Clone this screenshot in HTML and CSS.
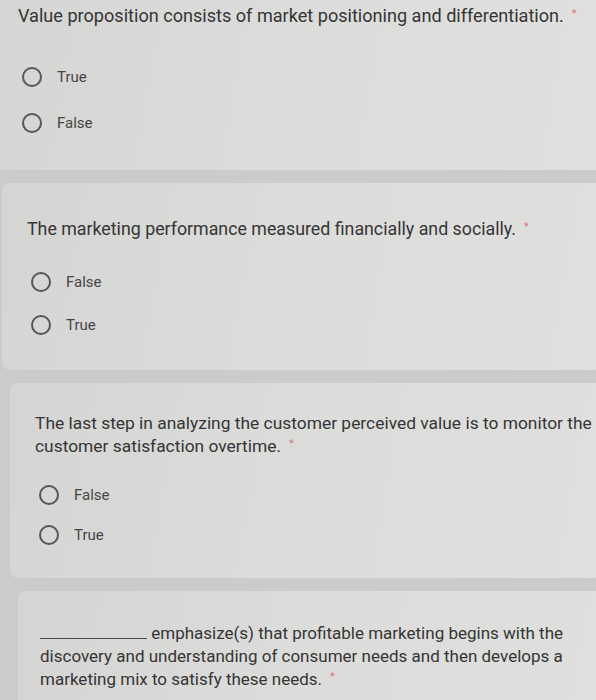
FILE: index.html
```html
<!DOCTYPE html>
<html>
<head>
<meta charset="utf-8">
<link rel="stylesheet" href="styles.css">
</head>
<body>
<div class="page">
  <section class="card card-1">
    <div class="question">Value proposition consists of market positioning and differentiation.<span class="req">*</span></div>
    <div class="options">
      <label class="option"><span class="radio"></span><span class="label">True</span></label>
      <label class="option"><span class="radio"></span><span class="label">False</span></label>
    </div>
  </section>
  <section class="card card-2">
    <div class="question">The marketing performance measured financially and socially.<span class="req">*</span></div>
    <div class="options">
      <label class="option"><span class="radio"></span><span class="label">False</span></label>
      <label class="option"><span class="radio"></span><span class="label">True</span></label>
    </div>
  </section>
  <section class="card card-3">
    <div class="question">The last step in analyzing the customer perceived value is to monitor the customer satisfaction overtime.<span class="req">*</span></div>
    <div class="options">
      <label class="option"><span class="radio"></span><span class="label">False</span></label>
      <label class="option"><span class="radio"></span><span class="label">True</span></label>
    </div>
  </section>
  <section class="card card-4">
    <div class="question"><span class="blank"></span> emphasize(s) that profitable marketing begins with the discovery and understanding of consumer needs and then develops a marketing mix to satisfy these needs.<span class="req">*</span></div>
  </section>
</div>
</body>
</html>
```

FILE: styles.css
```css
html, body {
  margin: 0;
  padding: 0;
}
body {
  width: 596px;
  height: 700px;
  overflow: hidden;
  background: #cbcbce;
  font-family: Roboto, "Liberation Sans", sans-serif;
  color: #383838;
}
.page {
  display: flex;
  flex-direction: column;
  gap: 13px;
}
.card {
  background: linear-gradient(100deg, #d5d5d4 0%, #dcdcdb 45%, #e0e0de 100%);
  border-radius: 8px;
  width: 640px;
  box-sizing: border-box;
  padding-left: 25px;
  flex: none;
}
.question {
  font-size: 17px;
  line-height: 23px;
  color: #353535;
  width: 560px;
}
.req {
  color: #d97777;
  font-size: 11px;
  line-height: 1;
  vertical-align: 5px;
  margin-left: 8px;
}
.options {
  display: flex;
  flex-direction: column;
}
.option {
  display: flex;
  align-items: center;
  height: 44px;
}
.radio {
  width: 16px;
  height: 16px;
  border: 2px solid #555555;
  border-radius: 50%;
  margin-left: 4px;
  flex: none;
}
.label {
  font-size: 15px;
  color: #464646;
  margin-left: 15px;
}
.blank {
  display: inline-block;
  width: 107px;
  border-bottom: 1px solid #4a4a4a;
  height: 16px;
  vertical-align: baseline;
}

.card-1 {
  margin-left: -7px;
  height: 170px;
  border-radius: 0 0 8px 8px;
  padding-top: 4px;
}
.card-1 .question { font-size: 18.1px; }
.card-1 .options { margin-top: 27px; }
.card-1 .option { height: 46px; }

.card-2 {
  margin-left: 2px;
  height: 187px;
  padding-top: 34px;
}
.card-2 .question { font-size: 17.8px; }
.card-2 .options { margin-top: 20px; }
.card-2 .option { height: 43px; }

.card-3 {
  margin-left: 10px;
  height: 195px;
  padding-top: 29px;
}
.card-3 .question { font-size: 17.4px; width: 572px; }
.card-3 .options { margin-top: 17px; }
.card-3 .option { height: 40px; }

.card-4 {
  margin-left: 18px;
  height: 140px;
  padding-left: 22px;
  padding-top: 31px;
}
.card-4 .question { font-size: 17px; width: 548px; }
```
